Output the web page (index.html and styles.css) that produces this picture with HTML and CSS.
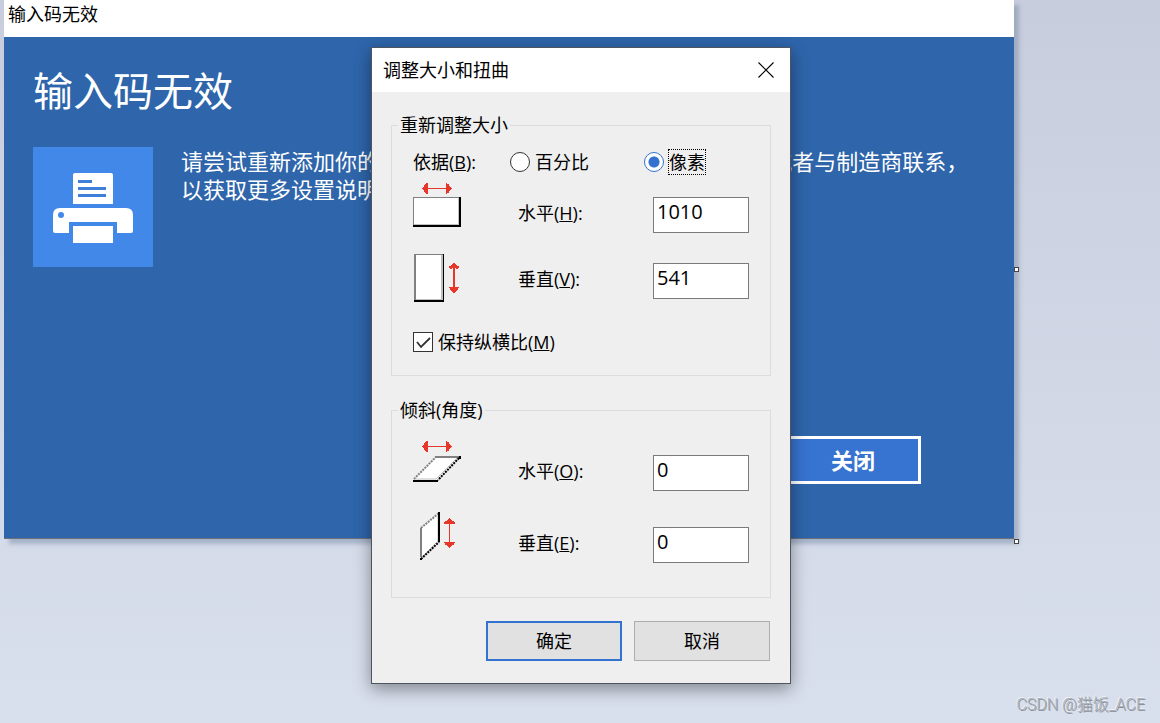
FILE: index.html
```html
<!DOCTYPE html>
<html lang="zh-CN">
<head>
  <meta charset="UTF-8">
  <title>调整大小和扭曲</title>
  <link rel="stylesheet" href="styles.css">
</head>
<body>
  <main class="canvas">
    <div class="canvas-title">输入码无效</div>
    <section class="panel">
      <h1>输入码无效</h1>
      <div class="message">
        <svg class="printer" viewBox="0 0 120 120" width="120" height="120">
          <rect width="120" height="120" fill="#4288e8"/>
          <path d="M40 57V28q0-2 2-2h36q2 0 2 2v29z" fill="#fff"/>
          <path d="M45 33h14v3H45zM45 40h28v3H45zM45 47h28v3H45z" fill="#3f7fd9"/>
          <path d="M20 84V68q0-7 7-7h66q7 0 7 7v16q0 2-2 2H84V75H36v11H22q-2 0-2-2z" fill="#fff"/>
          <circle cx="28" cy="68" r="3" fill="#4288e8"/>
          <path d="M40 79h40v17H40z" fill="#fff"/>
        </svg>
        <p>请尝试重新添加你的打印机, 并检查输入码是否正确无误再试 或者与制造商联系，<br>以获取更多设置说明。</p>
      </div>
      <button class="close-panel" type="button">关闭</button>
    </section>
    <span class="handle handle-side"></span>
    <span class="handle handle-corner"></span>
  </main>

  <form class="dialog">
    <header class="dialog-title">
      <h2>调整大小和扭曲</h2>
      <button class="dialog-close" type="button" aria-label="关闭">
        <svg viewBox="0 0 16 16" width="16" height="16"><path d="M.5.5l15 15M15.500.5l-15 15" stroke="#000" stroke-width="1.100"/></svg>
      </button>
    </header>
    <div class="dialog-body">
      <fieldset class="resize">
        <legend>重新调整大小</legend>
        <div class="units">
          <span>依据(<u>B</u>):</span>
          <label><input type="radio" name="unit"><span>百分比</span></label>
          <label><input type="radio" name="unit" checked><span class="focused">像素</span></label>
        </div>
        <div class="row">
          <svg viewBox="0 0 48 66" width="48" height="66" shape-rendering="crispEdges">
            <path d="M10 6h28v1H10zM9 6h1v1H9zM10 5h1v3h-1zM11 4h2v5h-2zM13 1h2v11h-2zM12 2h1v9h-1zM11 3h1v7h-1zM33 1h1v11h-1zM34 2h2v9h-2zM36 4h1v5h-1zM37 5h1v3h-1zM38 6h1v1h-1z" fill="#e8362a"/>
            <path d="M0 15h48v30H0z" fill="#000"/>
            <path d="M0 15h46v28H0z" fill="#808080"/>
            <path d="M1 16h45v27H1z" fill="#c0c0c0"/>
            <path d="M1 16h44v26H1z" fill="#fff"/>
          </svg>
          <label for="size-h">水平(<u>H</u>):</label>
          <input id="size-h" type="text" value="1010">
        </div>
        <div class="row">
          <svg viewBox="0 0 48 66" width="48" height="66" shape-rendering="crispEdges">
            <path d="M1 6h30v48H1z" fill="#000"/>
            <path d="M1 6h29v46H1z" fill="#808080"/>
            <path d="M3 7h27v45H3z" fill="#c0c0c0"/>
            <path d="M3 7h25v44H3z" fill="#fff"/>
            <path d="M40 15h2v30h-2zM39 16h4v1h-4zM38 17h6v1h-6zM36 18h10v2H36zM37 20h2v1h-2zM43 20h2v1h-2zM36 39h10v1H36zM37 40h8v2h-8zM38 42h6v1h-6zM39 43h4v1h-4z" fill="#e8362a"/>
          </svg>
          <label for="size-v">垂直(<u>V</u>):</label>
          <input id="size-v" type="text" value="541">
        </div>
        <label class="keep-ratio"><input type="checkbox" checked><span>保持纵横比(<u>M</u>)</span></label>
      </fieldset>

      <fieldset class="skew">
        <legend>倾斜(角度)</legend>
        <div class="row">
          <svg viewBox="0 0 48 72" width="48" height="72">
            <path d="M9 9h30v1H9zM10 8h1v3h-1zM11 6h1v7h-1zM12 5h1v9h-1zM13 4h2v11h-2zM33 4h1v11h-1zM34 5h2v9h-2zM36 7h1v5h-1zM37 8h1v3h-1z" fill="#e8362a"/>
            <path d="M23 20h23L25 43H1z" fill="#fff"/>
            <path d="M22 19h25v2H22z" fill="#808080"/>
            <path d="M1 42L23 20" fill="none" stroke="#808080" stroke-width="2" stroke-dasharray="2 1"/>
            <path d="M44 21L23 42H2" fill="none" stroke="#c0c0c0"/>
            <path d="M46 21L25 43" fill="none" stroke="#000" stroke-width="2" stroke-dasharray="2 1"/>
            <path d="M0 43h25v2H0zM46 19h2v3h-2z" fill="#000"/>
          </svg>
          <label for="skew-h">水平(<u>O</u>):</label>
          <input id="skew-h" type="text" value="0">
        </div>
        <div class="row">
          <svg viewBox="0 0 48 72" width="48" height="72">
            <path d="M8 19L26 4v28L8 49z" fill="#fff"/>
            <path d="M7 19h2v29H7z" fill="#808080"/>
            <path d="M8 19L26 4" fill="none" stroke="#808080" stroke-width="2" stroke-dasharray="2 1"/>
            <path d="M9 48L25 32V6" fill="none" stroke="#c0c0c0"/>
            <path d="M8 50L26 33" fill="none" stroke="#000" stroke-width="2" stroke-dasharray="2 1"/>
            <path d="M25 3h2v30h-2zM7 49h2v2H7z" fill="#000"/>
            <path d="M36 9h1v30h-1zM35 10h3v1h-3zM34 11h5v1h-5zM32 12h9v1h-9zM31 13h11v2H31zM31 33h11v1H31zM32 34h9v2h-9zM34 36h5v1h-5zM35 37h3v1h-3z" fill="#e8362a"/>
          </svg>
          <label for="skew-v">垂直(<u>E</u>):</label>
          <input id="skew-v" type="text" value="0">
        </div>
      </fieldset>

      <div class="actions">
        <button class="ok" type="button">确定</button>
        <button type="button">取消</button>
      </div>
    </div>
  </form>

  <div class="watermark">CSDN @猫饭_ACE</div>
</body>
</html>
```
FILE: styles.css
```css
* {
  box-sizing: border-box;
}

body {
  margin: 0;
  min-height: 100vh;
  position: relative;
  background: linear-gradient(#c7cddd, #d9e0ed);
  color: #000;
  font-family: "Open Sans", "Noto Sans CJK SC", sans-serif;
  font-size: 18px;
  line-height: 24px;
}

button,
input {
  font: inherit;
  color: inherit;
}

/* picture being edited */
.canvas {
  position: relative;
  margin: 0 146px 0 4px;
  box-shadow: 5px 5px 4px rgba(110, 130, 160, 0.45);
}

.canvas-title {
  height: 37px;
  padding: 2px 4px;
  background: #fff;
}

.panel {
  display: flex;
  flex-direction: column;
  min-height: 502px;
  padding: 26px 29px 54px;
  background: #2e65ab;
  border-bottom: 1px solid #6b6f7b;
  color: #fff;
}

.panel h1 {
  margin: 0 0 28px;
  font-size: 40px;
  font-weight: 400;
  line-height: 56px;
}

.message {
  display: flex;
  gap: 28px;
}

.message p {
  margin: 0;
  font-size: 22px;
  line-height: 28px;
  white-space: nowrap;
}

.printer {
  flex: none;
}

.close-panel {
  width: 136px;
  height: 48px;
  margin: auto 64px 0 auto;
  padding: 0;
  background: #3773d0;
  border: 3px solid #fff;
  font-size: 22px;
  font-weight: 700;
}

.handle {
  position: absolute;
  left: 100%;
  width: 5px;
  height: 5px;
  background: #fff;
  border: 1px solid #444;
}

.handle-side {
  top: 50%;
  margin-top: -3px;
}

.handle-corner {
  top: 100%;
}

/* dialog */
.dialog {
  position: absolute;
  top: 47px;
  left: 371px;
  width: 420px;
  background: #efefef;
  border: 1px solid #4c5560;
  box-shadow: 0 5px 16px rgba(0, 0, 0, 0.4);
}

.dialog-title {
  display: flex;
  align-items: center;
  justify-content: space-between;
  height: 44px;
  padding: 0 16px 0 11px;
  background: #fff;
}

.dialog-title h2 {
  margin: 0;
  font-size: 18px;
  font-weight: 400;
}

.dialog-close {
  display: flex;
  padding: 0;
  background: none;
  border: 0;
}

.dialog-body {
  padding: 21px 19px 22px;
}

fieldset {
  min-width: 0;
  margin: 0;
  border: 1px solid #dcdcdc;
}

legend {
  margin-left: 6px;
  padding: 0 2px;
}

.resize {
  padding: 5px 21px 5px 0;
}

.skew {
  margin-top: 22px;
  padding: 15px 21px 16px 0;
}

.units {
  display: grid;
  grid-template-columns: 97px 134px 1fr;
  align-items: center;
  height: 40px;
  padding-left: 21px;
}

.units label,
.keep-ratio {
  display: flex;
  align-items: center;
  gap: 5px;
}

.focused {
  outline: 1px dotted #000;
}

.row {
  display: grid;
  grid-template-columns: 105px 1fr 96px;
  align-items: center;
  padding-left: 21px;
}

.row svg {
  display: block;
}

.row label {
  padding-bottom: 4px;
}

.row input {
  width: 100%;
  height: 36px;
  padding: 0 3px 8px;
  background: #fff;
  border: 1px solid #7a7a7a;
  border-radius: 0;
  font-size: 20px;
}

input[type="radio"],
input[type="checkbox"] {
  appearance: none;
  flex: none;
  width: 20px;
  height: 20px;
  margin: 0;
  background: #fff;
  border: 1px solid #333;
}

input[type="radio"] {
  border-radius: 50%;
}

input[type="radio"]:checked {
  border-color: #3373cf;
  background: radial-gradient(circle, #3373cf 5px, #fff 6px);
}

input[type="checkbox"]:checked {
  background: #fff url("data:image/svg+xml,%3Csvg xmlns='http://www.w3.org/2000/svg' viewBox='0 0 18 18'%3E%3Cpath d='M3 9l4 5 9-9' fill='none' stroke='%23333' stroke-width='1.800'/%3E%3C/svg%3E");
}

.keep-ratio {
  height: 56px;
  padding-left: 21px;
}

.actions {
  display: flex;
  justify-content: flex-end;
  gap: 12px;
  margin: 23px 1px 0 0;
}

.actions button {
  width: 136px;
  height: 40px;
  padding: 0;
  background: #e1e1e1;
  border: 1px solid #adadad;
}

.actions .ok {
  border: 2px solid #3373cf;
}

.watermark {
  position: absolute;
  right: 15px;
  bottom: 6px;
  color: #a9adb6;
  font-family: Roboto, "Noto Sans CJK SC", sans-serif;
  font-size: 16px;
  font-weight: 300;
  text-shadow: 1px 1px 0 #8a8f98, -1px -1px 0 #eef1f6;
}
```
